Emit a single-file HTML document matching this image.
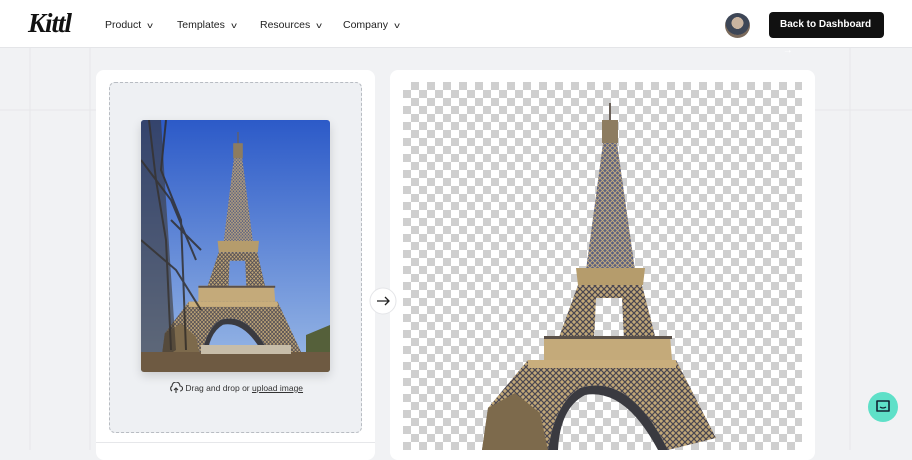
<!DOCTYPE html>
<html><head><meta charset="utf-8"><style>
*{box-sizing:border-box;margin:0;padding:0}
body{width:912px;height:450px;overflow:hidden;background:#f1f2f4;font-family:"Liberation Sans",sans-serif;position:relative}
.hdr{position:absolute;left:0;top:0;width:912px;height:48px;background:#fff;border-bottom:1px solid #e4e5e8}
.logo{position:absolute;left:28px;top:8px;font:italic bold 27px "Liberation Serif",serif;color:#111;letter-spacing:-1px}
.nav{position:absolute;top:19px;font-size:10.5px;color:#222}
.nav span{font-size:8px;margin-left:7px;display:inline-block;transform:scaleX(1.4)}
.av{position:absolute;left:725px;top:13px;width:25px;height:25px;border-radius:50%;background:radial-gradient(circle at 50% 40%,#c9b4a0 0 30%,#3d4656 31% 60%,#7a6a5c 61%)}
.btn{position:absolute;left:769px;top:12px;width:115px;height:26px;background:#111;border-radius:4px;color:#fff;font-size:10px;font-weight:bold;line-height:26px;padding-left:11px}
.card{position:absolute;background:#fff;border-radius:8px}
.drop{position:absolute;left:109px;top:82px;width:253px;height:351px;background:#eef0f3;border:1px dashed #b8bcc2;border-radius:6px}
.photo{position:absolute;left:141px;top:120px;width:189px;height:252px;border-radius:3px;overflow:hidden;box-shadow:0 4px 10px rgba(0,0,0,.15)}
.chk{position:absolute;left:403px;top:82px;width:399px;height:368px;background-color:#fff;background-image:linear-gradient(45deg,#cfcfcf 25%,transparent 25%,transparent 75%,#cfcfcf 75%),linear-gradient(45deg,#cfcfcf 25%,transparent 25%,transparent 75%,#cfcfcf 75%);background-size:16px 16px;background-position:0 0,8px 8px}
</style></head><body>
<svg width="912" height="450" style="position:absolute;left:0;top:0">
<g stroke="#e6e7ea" stroke-width="1">
<line x1="30" y1="48" x2="30" y2="450"/><line x1="90" y1="48" x2="90" y2="450"/><line x1="850" y1="48" x2="850" y2="450"/>
<line x1="0" y1="110" x2="96" y2="110"/><line x1="815" y1="110" x2="912" y2="110"/>
</g></svg>
<div class="hdr">
<div class="logo">Kittl</div>
<div class="nav" style="left:105px">Product<span>v</span></div>
<div class="nav" style="left:177px">Templates<span>v</span></div>
<div class="nav" style="left:260px">Resources<span>v</span></div>
<div class="nav" style="left:343px">Company<span>v</span></div>
<div class="av"></div>
<div class="btn">Back to Dashboard &nbsp;→</div>
</div>
<div class="card" style="left:96px;top:70px;width:279px;height:390px"></div>
<div style="position:absolute;left:96px;top:442px;width:279px;height:1px;background:#e6e7ea"></div>
<div class="drop"></div>
<div class="card" style="left:390px;top:70px;width:425px;height:390px"></div>
<div class="chk"></div>
<svg width="0" height="0" style="position:absolute"><defs>
<pattern id="lat" width="6" height="6" patternUnits="userSpaceOnUse">
<rect width="6" height="6" fill="#c2a878"/>
<path d="M0,0 L6,6 M6,0 L0,6" stroke="#4a4650" stroke-width="1.2"/>
</pattern>
<pattern id="lat2" width="5" height="5" patternUnits="userSpaceOnUse">
<rect width="5" height="5" fill="#5a6080"/>
<path d="M0,0 L5,5 M5,0 L0,5" stroke="#c6ad7e" stroke-width="0.9"/>
</pattern>
<g id="tw">
<rect x="-1" y="0" width="2" height="18" fill="#6a6058"/>
<rect x="-8" y="17" width="16" height="23" fill="#8d7c60"/>
<polygon points="-7,40 7,40 25,167 -24,167" fill="url(#lat2)"/>
<polygon points="-34,165 35,165 33,182 -32,182" fill="#b59c6c"/>
<path fill-rule="evenodd" d="M-32,182 L32,182 L46,237 L-52,237 Z M-14,195 L12,195 L14,237 L-16,237 Z" fill="url(#lat)"/>
<polygon points="-66,233 60,233 62,257 -66,257" fill="#c4aa7a"/>
<rect x="-66" y="233" width="128" height="3" fill="#5a5048"/>
<path d="M-82,257 L66,257 L106,335 L58,347 Q20,270 -30,285 Q-55,300 -62,347 L-128,347 L-122,305 Z" fill="url(#lat)"/>
<rect x="-82" y="257" width="148" height="8" fill="#c9ae7c"/>
<path d="M-62,347 Q-55,300 -30,285 Q20,270 58,347 L48,347 Q15,285 -25,292 Q-50,305 -52,347Z" fill="#3a3a40"/>
<path d="M-128,347 L-122,305 L-95,290 L-70,310 L-62,347Z" fill="#7d6a4c"/>
</g></defs></svg>
<div class="photo">
<svg width="189" height="252">
<defs><linearGradient id="sky" x1="0" y1="0" x2="0" y2="1"><stop offset="0" stop-color="#2c5ac8"/><stop offset="1" stop-color="#9ab9e6"/></linearGradient></defs>
<rect width="189" height="252" fill="url(#sky)"/>
<use href="#tw" transform="translate(97,12) scale(0.6,0.66)"/>
<g stroke="#2e2a26" stroke-width="2" fill="none" opacity=".8">
<path d="M8,0 L15,60 L25,120 L30,230"/><path d="M25,0 L20,50 L40,100 L45,230"/><path d="M0,40 L30,80 L55,140"/><path d="M0,120 L35,150 L60,190"/><path d="M30,100 L60,130"/>
</g>
<path d="M0,0 L20,0 L25,80 L35,230 L0,252Z" fill="#3a3630" opacity=".6"/>
<path d="M165,215 L189,205 L189,252 L165,252Z" fill="#55603a"/>
<rect x="0" y="232" width="189" height="20" fill="#6e5a42"/>
<rect x="60" y="225" width="90" height="9" fill="#c7bda9"/>
</svg></div>
<div style="position:absolute;left:169px;top:382px;font-size:8.5px;color:#333">
<svg width="14" height="12" style="vertical-align:-3px"><path d="M3,9 A3,3 0 0 1 3,4 A4,4 0 0 1 11,4 A2.5,2.5 0 0 1 11,9" fill="none" stroke="#333" stroke-width="1.1"/><path d="M7,11 V6 M5,8 L7,6 L9,8" fill="none" stroke="#333" stroke-width="1.1"/></svg>
Drag and drop or <span style="text-decoration:underline">upload image</span></div>
<svg width="912" height="450" style="position:absolute;left:0;top:0">
<use href="#tw" transform="translate(610,103)"/>
<circle cx="383" cy="301" r="13" fill="#fff" stroke="#e4e5e8"/>
<path d="M377,301 H389 M385,297 L389,301 L385,305" fill="none" stroke="#222" stroke-width="1.3"/>
<circle cx="883" cy="407" r="15" fill="#5fe0c8"/>
<path d="M877,401 h12 v10 h-12z" fill="none" stroke="#123" stroke-width="1.6" stroke-linejoin="round"/>
<path d="M880,407 q3,2 6,0" fill="none" stroke="#123" stroke-width="1.3"/>
</svg>
</body></html>
